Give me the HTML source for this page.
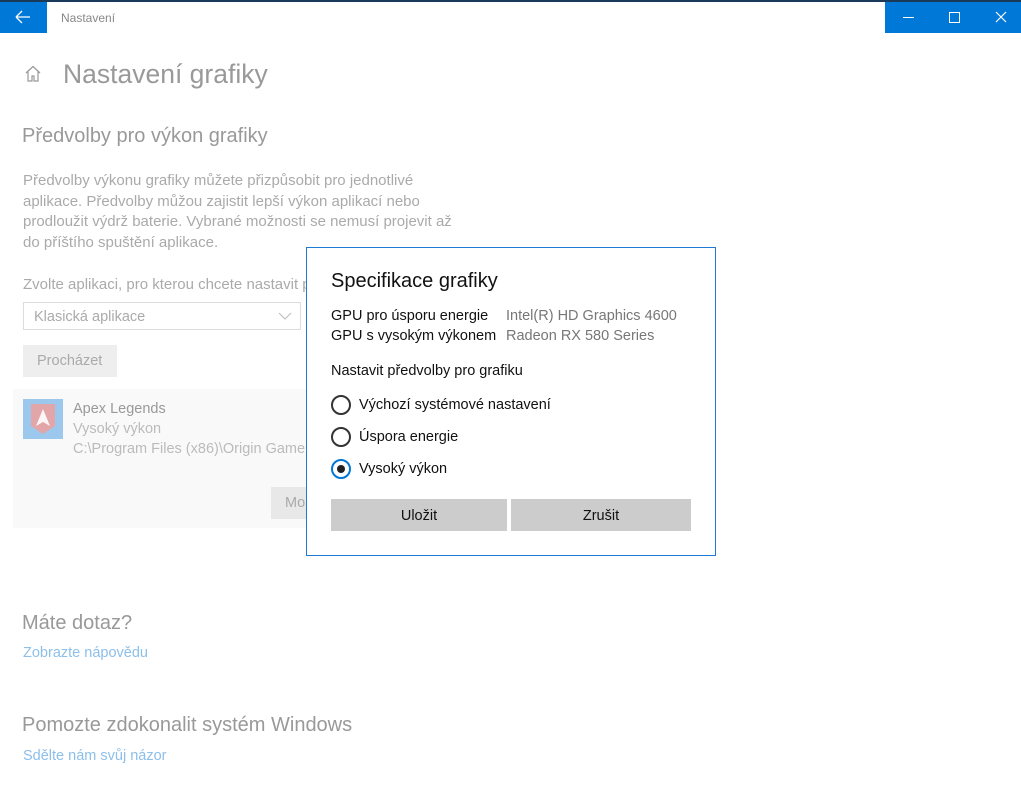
<!DOCTYPE html>
<html><head><meta charset="utf-8"><style>
body{margin:0;width:1021px;height:791px;background:#fff;font-family:"Segoe UI","Liberation Sans",sans-serif;position:relative;overflow:hidden}
.a{position:absolute;white-space:nowrap}
.g{color:#9a9a9a}
</style></head><body>
<div class="a" style="left:0;top:0;width:1021px;height:2px;background:#1a3a5c"></div>
<div class="a" style="left:0;top:2px;width:47px;height:31px;background:#0078d7"></div>
<svg class="a" style="left:15px;top:10px" width="16" height="14"><path d="M1 7H15M1 7L7 1M1 7L7 13" stroke="#fff" stroke-width="1.3" fill="none"/></svg>
<div class="a" style="left:61px;top:11px;font-size:12px;color:#888">Nastavení</div>
<div class="a" style="left:885px;top:2px;width:136px;height:31px;background:#0078d7"></div>
<div class="a" style="left:903px;top:17px;width:11px;height:1px;background:#fff"></div>
<div class="a" style="left:949px;top:12px;width:9px;height:9px;border:1px solid #fff"></div>
<svg class="a" style="left:995px;top:11px" width="12" height="12"><path d="M1 1L11 11M11 1L1 11" stroke="#fff" stroke-width="1.2"/></svg>
<svg class="a" style="left:24px;top:65px" width="18" height="17"><path d="M2 8L9 1.5L16 8M4 6.5V16H8V11H10V16H14V6.5" stroke="#999" stroke-width="1.2" fill="none"/></svg>
<div class="a g" style="left:63px;top:59px;font-size:26.5px;font-weight:300;color:#999">Nastavení grafiky</div>
<div class="a g" style="left:22px;top:125px;font-size:20px;color:#999">Předvolby pro výkon grafiky</div>
<div class="a g" style="left:23px;top:171px;font-size:15px;line-height:20.5px;color:#aaa">Předvolby výkonu grafiky můžete přizpůsobit pro jednotlivé<br>aplikace. Předvolby můžou zajistit lepší výkon aplikací nebo<br>prodloužit výdrž baterie. Vybrané možnosti se nemusí projevit až<br>do příštího spuštění aplikace.</div>
<div class="a" style="left:23px;top:276px;font-size:15px;color:#aaa">Zvolte aplikaci, pro kterou chcete nastavit p</div>
<div class="a" style="left:23px;top:302px;width:278px;height:28px;border:1px solid #ddd;box-sizing:border-box"></div>
<div class="a" style="left:34px;top:309px;font-size:14.5px;color:#aaa">Klasická aplikace</div>
<svg class="a" style="left:278px;top:312px" width="14" height="9"><path d="M1 1L7 7L13 1" stroke="#bbb" fill="none"/></svg>
<div class="a" style="left:23px;top:345px;width:94px;height:32px;background:#eee"></div>
<div class="a" style="left:37px;top:353px;font-size:14.5px;color:#aaa">Procházet</div>
<div class="a" style="left:13px;top:389px;width:293px;height:139px;background:#f9f9f9"></div>
<div class="a" style="left:23px;top:399px;width:40px;height:40px;background:#9dc8ee"></div>
<svg class="a" style="left:29px;top:402px" width="28" height="34"><path d="M2 2H26V24L14 32L2 24Z" fill="#e2a5a8"/><path d="M14 7L7 24L14 20L21 24Z" fill="#fff" opacity=".9"/></svg>
<div class="a" style="left:73px;top:401px;font-size:14.5px;color:#999">Apex Legends</div>
<div class="a" style="left:73px;top:421px;font-size:14.5px;color:#bbb">Vysoký výkon</div>
<div class="a" style="left:73px;top:441px;font-size:14.5px;color:#bbb">C:\Program Files (x86)\Origin Game</div>
<div class="a" style="left:271px;top:487px;width:35px;height:32px;background:#e8e8e8;overflow:hidden"><span style="position:absolute;left:14px;top:8px;font-size:14.5px;color:#aaa">Mo</span></div>
<div class="a" style="left:22px;top:612px;font-size:20px;color:#999">Máte dotaz?</div>
<div class="a" style="left:23px;top:645px;font-size:14.5px;color:#8cbfea">Zobrazte nápovědu</div>
<div class="a" style="left:22px;top:714px;font-size:20px;color:#999">Pomozte zdokonalit systém Windows</div>
<div class="a" style="left:23px;top:748px;font-size:14.5px;color:#8cbfea">Sdělte nám svůj názor</div>

<div class="a" style="left:306px;top:247px;width:410px;height:309px;border:1px solid #1e7ad4;box-sizing:border-box;background:#fff"></div>
<div class="a" style="left:331px;top:270px;font-size:20px;color:#111">Specifikace grafiky</div>
<div class="a" style="left:331px;top:308px;font-size:14.5px;color:#111">GPU pro úsporu energie</div>
<div class="a" style="left:506px;top:308px;font-size:14.5px;color:#777">Intel(R) HD Graphics 4600</div>
<div class="a" style="left:331px;top:328px;font-size:14.5px;color:#111">GPU s vysokým výkonem</div>
<div class="a" style="left:506px;top:328px;font-size:14.5px;color:#777">Radeon RX 580 Series</div>
<div class="a" style="left:331px;top:363px;font-size:14.5px;color:#111">Nastavit předvolby pro grafiku</div>
<div class="a" style="left:331px;top:395px;width:20px;height:20px;border:2px solid #333;border-radius:50%;box-sizing:border-box"></div>
<div class="a" style="left:359px;top:397px;font-size:14.5px;color:#111">Výchozí systémové nastavení</div>
<div class="a" style="left:331px;top:427px;width:20px;height:20px;border:2px solid #333;border-radius:50%;box-sizing:border-box"></div>
<div class="a" style="left:359px;top:429px;font-size:14.5px;color:#111">Úspora energie</div>
<div class="a" style="left:331px;top:459px;width:20px;height:20px;border:2px solid #0078d7;border-radius:50%;box-sizing:border-box"></div>
<div class="a" style="left:337px;top:465px;width:8px;height:8px;background:#222;border-radius:50%"></div>
<div class="a" style="left:359px;top:461px;font-size:14.5px;color:#111">Vysoký výkon</div>
<div class="a" style="left:331px;top:499px;width:176px;height:32px;background:#ccc;text-align:center;line-height:34px;font-size:14.5px;color:#111">Uložit</div>
<div class="a" style="left:511px;top:499px;width:180px;height:32px;background:#ccc;text-align:center;line-height:34px;font-size:14.5px;color:#111">Zrušit</div>
</body></html>
